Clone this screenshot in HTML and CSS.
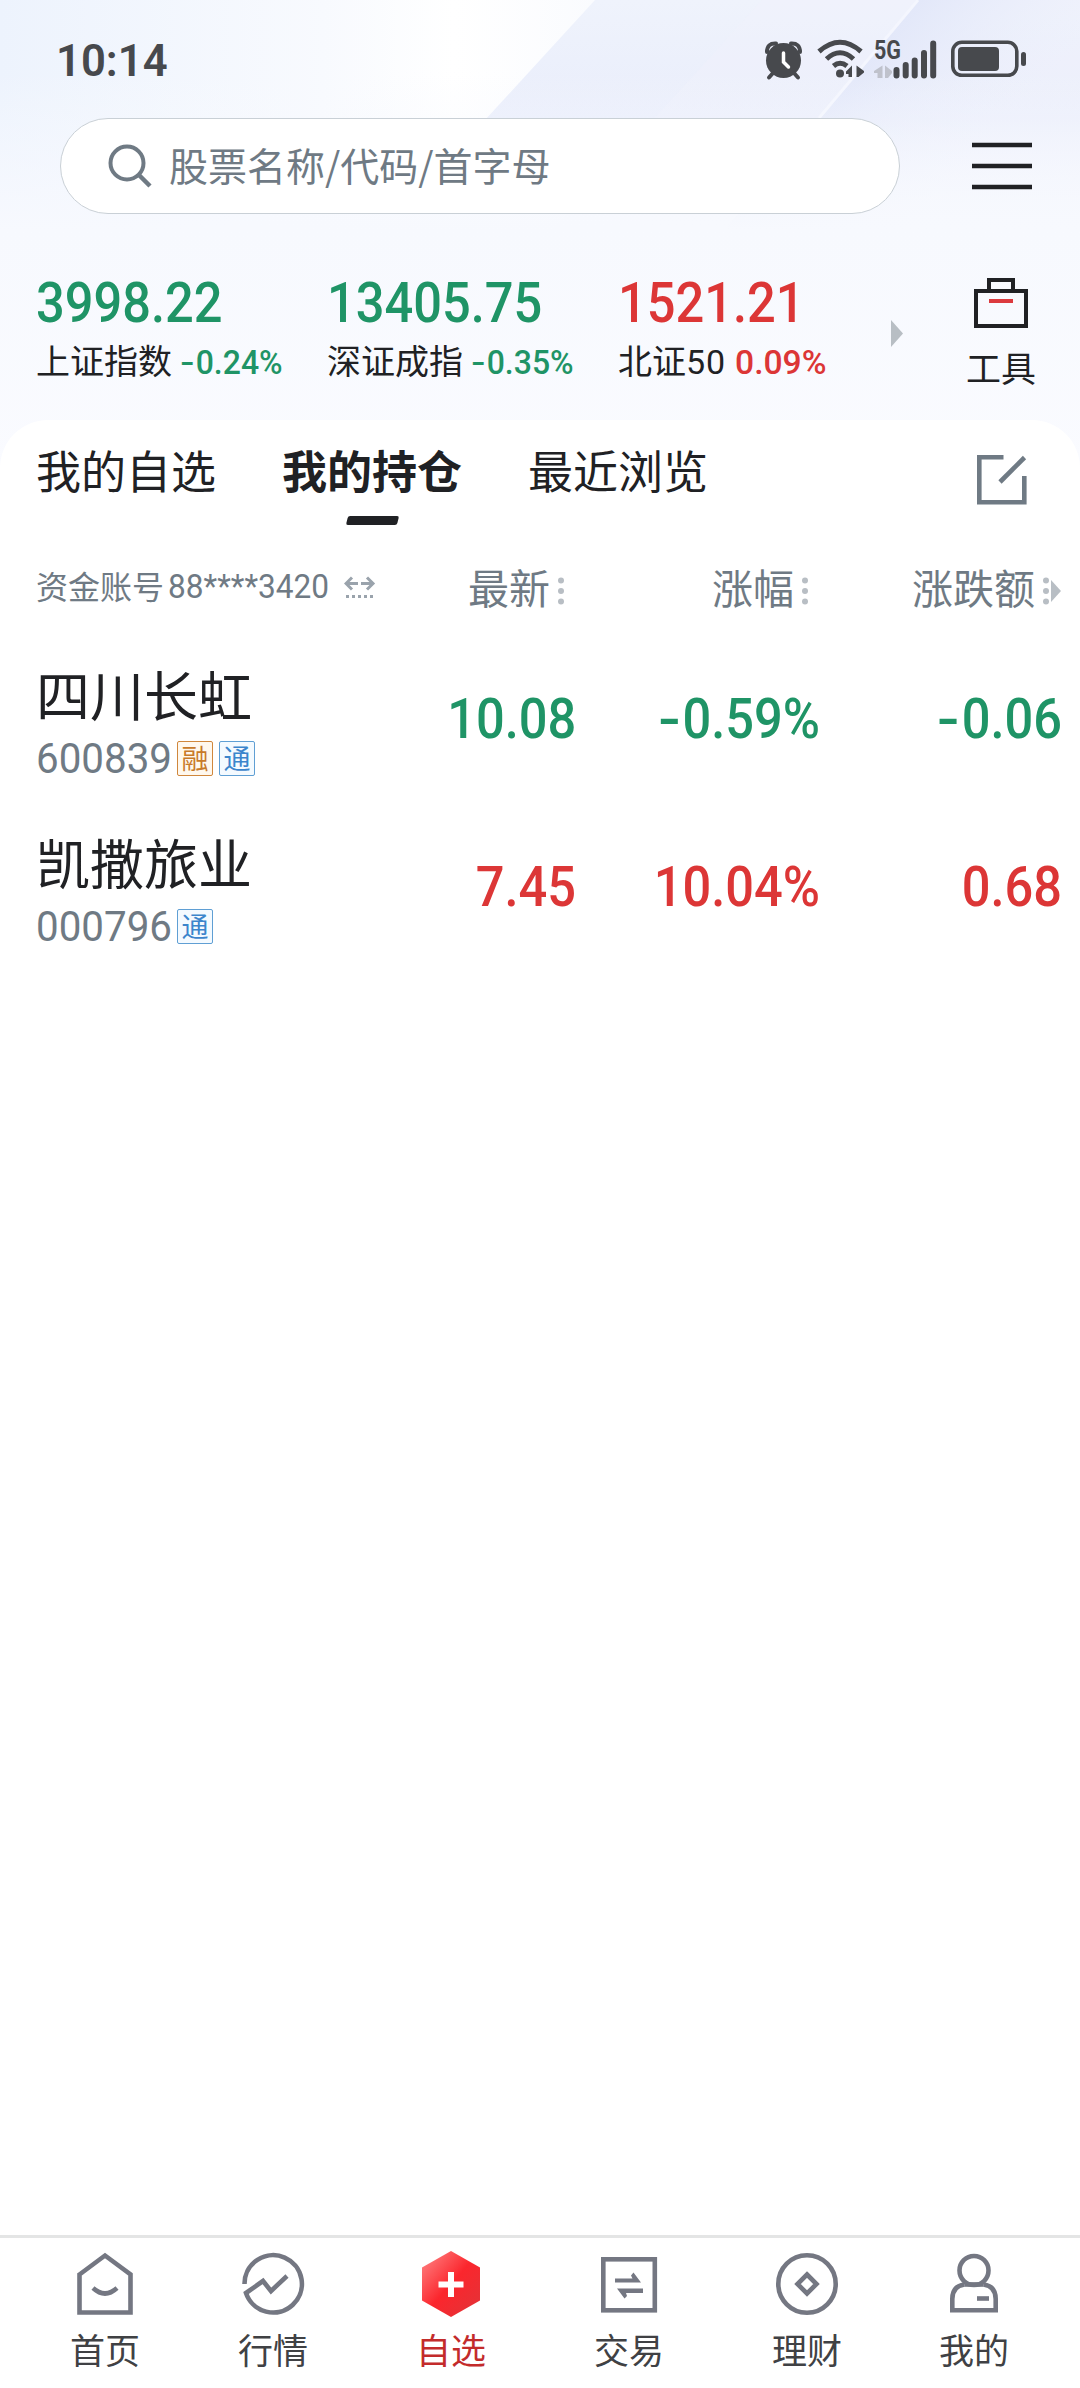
FILE: index.html
```html
<!DOCTYPE html>
<html lang="zh-CN">
	<head>
		<meta charset="utf-8" />
		<title>我的持仓</title>
		<link rel="stylesheet" href="styles.css">
	</head>
	<body>
		<div class="header">
			<svg class="header-bg" width="1080" height="480" viewBox="0 0 1080 480">
				<defs>
					<linearGradient id="base" x1="0" y1="0" x2="1" y2="0">
						<stop offset="0" stop-color="#edf3fd" />
						<stop offset="0.3" stop-color="#f8fafe" />
						<stop offset="0.42" stop-color="#ffffff" />
						<stop offset="0.6" stop-color="#f8fafe" />
						<stop offset="1" stop-color="#f4f7fe" />
					</linearGradient>
					<linearGradient id="band" gradientUnits="userSpaceOnUse" x1="0" y1="0" x2="0" y2="240">
						<stop offset="0" stop-color="#eff3fc" />
						<stop offset="0.5" stop-color="#e9edfb" />
						<stop offset="0.9" stop-color="#e9edfb" stop-opacity="0" />
					</linearGradient>
					<linearGradient id="band2" gradientUnits="userSpaceOnUse" x1="850" y1="20" x2="980" y2="150">
						<stop offset="0" stop-color="#dde3f8" />
						<stop offset="1" stop-color="#ebeffb" stop-opacity="0" />
					</linearGradient>
					<linearGradient id="fade" x1="0" y1="0" x2="0" y2="1">
						<stop offset="0.15" stop-color="#f8faff" stop-opacity="0" />
						<stop offset="0.48" stop-color="#f7f9fe" />
						<stop offset="1" stop-color="#fafbff" />
					</linearGradient>
				</defs>
				<rect width="1080" height="480" fill="url(#base)" />
				<path d="M595 0H1080V240H375Z" fill="url(#band)" />
				<path d="M762 0H1080V240H544Z" fill="#f1f3fd" opacity="0.3" />
				<path d="M918 0H1080V240H716Z" fill="url(#band2)" />
				<path d="M918 0L819 118" stroke="#f4f6fe" stroke-width="3" />
				<rect width="1080" height="480" fill="url(#fade)" />
			</svg>
			<div class="status">
				<span class="time">10:14</span>
				<svg width="264" height="54" viewBox="764 32 264 54" fill="#47494d">
					<!-- alarm -->
					<circle cx="783.5" cy="60.5" r="17.5" />
					<path d="M767 52Q767 43 776 43.500M800 52Q800 43 791 43.500M773 73L769 77.500M794 73L798 77.500" fill="none" stroke="#47494d" stroke-width="4" stroke-linecap="round" />
					<path d="M783.500 53V62L788.500 67" fill="none" stroke="#fff" stroke-width="3.500" stroke-linecap="round" />
					<!-- wifi -->
					<path d="M819 51.500Q840 33 861 51.500M826.500 59Q840 46.500 853.500 59M833.500 66Q840 60.500 847 66" fill="none" stroke="#47494d" stroke-width="5" />
					<circle cx="840" cy="73.500" r="4" />
					<path d="M852 65.500V77H848.500V74H846V71.500ZM856.500 65.500L864 71V72.500L858.500 77H856.500Z" />
					<!-- mobile signal -->
					<text class="net" x="874" y="59" textLength="27" lengthAdjust="spacingAndGlyphs">5G</text>
					<path d="M882.500 65.500V78H877.500V73H874V71ZM885 65.500L892 71V73L888 78H885Z" fill="#bfc2cc" />
					<path d="M896.500 70V75.500M905.700 65V75.500M914.700 60.500V75.500M924 53V75.500M933.200 43.500V75.500" stroke="#47494d" stroke-width="6" stroke-linecap="round" />
					<!-- battery -->
					<rect x="952.800" y="42.300" width="64" height="33" rx="9" fill="none" stroke="#47494d" stroke-width="3.600" />
					<rect x="958" y="47" width="41" height="24" rx="4" />
					<rect x="1021" y="52" width="5" height="14" rx="2.500" />
				</svg>
			</div>
			<div class="search-row">
				<div class="search">
					<svg width="46" height="46" viewBox="0 0 46 46" fill="none" stroke="#6f7a84" stroke-width="4">
						<circle cx="20" cy="20" r="16.500" />
						<path d="M31 31L43 43" stroke-width="4.500" />
					</svg>
					<span>股票名称/代码/首字母</span>
				</div>
				<svg width="60" height="48" viewBox="0 0 60 48" stroke="#202124" stroke-width="4.600">
					<path d="M0 3H60M0 24H60M0 45H60" />
				</svg>
			</div>
			<div class="indexes">
				<div class="index down">
					<div class="value">3998.22</div>
					<div class="label"><span>上证指数</span><b><u>-</u>0.24%</b></div>
				</div>
				<div class="index down">
					<div class="value">13405.75</div>
					<div class="label"><span>深证成指</span><b><u>-</u>0.35%</b></div>
				</div>
				<div class="index up">
					<div class="value">1521.21</div>
					<div class="label"><span>北证<i>50</i></span><b>0.09%</b></div>
				</div>
				<svg class="more" width="12" height="27" viewBox="0 0 12 27"><path d="M0 0L12 13.500L0 27Z" fill="#b8bec4" /></svg>
				<div class="tools">
					<svg width="54" height="50" viewBox="0 0 54 50" fill="none" stroke="#202124" stroke-width="4">
						<path d="M2 13H52V48H2ZM15 13V2H39V13" />
						<path d="M15 23H39" stroke="#dc3a3e" />
					</svg>
					<span>工具</span>
				</div>
			</div>
		</div>

		<div class="panel">
			<div class="tabs">
				<span>我的自选</span>
				<span class="active">我的持仓</span>
				<span>最近浏览</span>
				<svg class="edit" width="50" height="50" viewBox="0 0 50 50" fill="none" stroke="#6f7a84" stroke-width="4.600">
					<path d="M26.500 2.300H2.300V47.300H47.300V21" />
					<path d="M23 27L47.500 2.500" />
				</svg>
			</div>
			<div class="row head">
				<div class="account">
					<span>资金账号</span><i>88****3420</i>
					<svg width="32" height="24" viewBox="0 0 32 24" fill="none" stroke="#9aa3ac" stroke-width="3">
						<path d="M14 7.500H2.500M8 1.500L2 7.500L8 13.500M17 7.500H28.500M23 1.500L29 7.500L23 13.500" />
						<path d="M2 20.500H30" stroke-dasharray="3 3" />
					</svg>
				</div>
				<div class="col">最新<svg width="8" height="28" viewBox="0 0 8 28" fill="#b8bec4"><circle cx="4" cy="3.500" r="3" /><circle cx="4" cy="14" r="3" /><circle cx="4" cy="24.500" r="3" /></svg></div>
				<div class="col">涨幅<svg width="8" height="28" viewBox="0 0 8 28" fill="#b8bec4"><circle cx="4" cy="3.500" r="3" /><circle cx="4" cy="14" r="3" /><circle cx="4" cy="24.500" r="3" /></svg></div>
				<div class="col last">涨跌额<svg width="20" height="28" viewBox="0 0 20 28" fill="#b8bec4"><circle cx="4" cy="3.500" r="3" /><circle cx="4" cy="14" r="3" /><circle cx="4" cy="24.500" r="3" /><path d="M9 3L19 14L9 25Z" /></svg></div>
			</div>
			<div class="row stock down">
				<div>
					<div class="name">四川长虹</div>
					<div class="code"><span>600839</span><em class="rong">融</em><em>通</em></div>
				</div>
				<div class="num">10.08</div>
				<div class="num"><u>-</u>0.59%</div>
				<div class="num"><u>-</u>0.06</div>
			</div>
			<div class="row stock up">
				<div>
					<div class="name">凯撒旅业</div>
					<div class="code"><span>000796</span><em>通</em></div>
				</div>
				<div class="num">7.45</div>
				<div class="num">10.04%</div>
				<div class="num">0.68</div>
			</div>
		</div>

		<div class="nav">
			<div class="item">
				<svg width="68" height="68" viewBox="0 0 68 68">
					<path d="M8.500 24.500L34 5.500L59.500 24.500V62.500H8.500Z" />
					<path d="M22 38Q34 49 46 38" />
				</svg>
				<span>首页</span>
			</div>
			<div class="item">
				<svg width="68" height="68" viewBox="0 0 68 68">
					<path d="M5.500 34A28.700 28.700 0 1 1 7 43L24 31L32 41L48 26" />
				</svg>
				<span>行情</span>
			</div>
			<div class="item active">
				<svg width="68" height="68" viewBox="0 0 68 68">
					<defs>
						<linearGradient id="hex" x1="0" y1="0" x2="1" y2="1">
							<stop offset="0" stop-color="#ff8a8a" />
							<stop offset="0.5" stop-color="#fb262d" />
							<stop offset="1" stop-color="#e03438" />
						</linearGradient>
					</defs>
					<path d="M34 1L63 17.500V50.500L34 67L5 50.500V17.500Z" fill="url(#hex)" stroke="none" />
					<path d="M34 22V47M21.500 34.500H46.500" stroke="#fff" stroke-width="6" />
				</svg>
				<span>自选</span>
			</div>
			<div class="item">
				<svg width="68" height="68" viewBox="0 0 68 68">
					<rect x="8.300" y="9.300" width="51.500" height="51" />
					<path d="M20 28.500V32.500H46L38.500 22.500L36 25.500L37.500 28.500ZM48 43V38.500H22L29.500 48.500L32 46L31 43Z" fill="#747782" stroke="none" />
				</svg>
				<span>交易</span>
			</div>
			<div class="item">
				<svg width="68" height="68" viewBox="0 0 68 68">
					<circle cx="34" cy="34" r="28.700" />
					<path d="M34 24.500L43.500 34L34 43.500L24.500 34Z" />
				</svg>
				<span>理财</span>
			</div>
			<div class="item">
				<svg width="68" height="68" viewBox="0 0 68 68">
					<ellipse cx="34" cy="20.500" rx="14.500" ry="14.500" />
					<path d="M24.500 34.500Q12.300 36 12.300 49V60.300H55.700V49Q55.700 36 43.500 34.500" />
					<path d="M24.500 34.500H43.500" />
					<path d="M37 48.500H49" />
				</svg>
				<span>我的</span>
			</div>
		</div>
	</body>
</html>
```

FILE: styles.css
```css
* {
	box-sizing: border-box;
}

body {
	margin: 0;
	width: 1080px;
	height: 2388px;
	display: flex;
	flex-direction: column;
	overflow: hidden;
	background-color: #fff;
	color: #202124;
	font-family: "Noto Sans CJK SC", sans-serif;
}

svg {
	display: block;
	flex: none;
}

i,
em {
	font-style: normal;
}

/* minus sign, wider than the font's own */
u {
	display: inline-block;
	margin: 0 0.09em 0 0.03em;
	text-decoration: none;
	transform: scaleX(1.3);
}

.up {
	color: #dc3636;
}

.down {
	color: #1f9466;
}

/* header */

.header {
	position: relative;
	height: 420px;
}

.header-bg {
	position: absolute;
	top: 0;
	left: 0;
	z-index: -1;
}

.status {
	height: 118px;
	padding: 32px 52px 0 56px;
	display: flex;
	justify-content: space-between;
	align-items: flex-start;
}

.time {
	margin-top: 6px;
	font-family: Roboto, sans-serif;
	font-size: 45px;
	font-weight: 600;
	line-height: 46px;
	color: #47494d;
	transform: scaleX(0.97);
	transform-origin: left;
}

.net {
	font-family: Roboto, sans-serif;
	font-size: 25px;
	font-weight: 700;
}

.search-row {
	display: flex;
	justify-content: space-between;
	align-items: center;
	padding: 0 48px 0 60px;
}

.search {
	width: 840px;
	height: 96px;
	padding-left: 46px;
	display: flex;
	align-items: center;
	gap: 16px;
	border: 1px solid #c9d0d6;
	border-radius: 48px;
	background-color: #fff;
	color: #6f7a84;
	font-size: 39px;
	line-height: 48px;
}

.search span {
	margin-top: -4px;
}

.indexes {
	display: flex;
	padding: 58px 44px 0 36px;
}

.index {
	width: 291px;
	white-space: nowrap;
}

.value {
	font-family: Roboto, sans-serif;
	font-size: 55px;
	font-weight: 500;
	line-height: 62px;
	transform: scaleX(0.92);
	transform-origin: left;
}

.label {
	display: flex;
	gap: 9px;
	margin-top: 6px;
	color: #202124;
	font-size: 34px;
	line-height: 40px;
}

.label i,
.label b {
	font-family: Roboto, sans-serif;
	font-weight: 400;
}

.label i {
	letter-spacing: 1px;
}

.label b {
	margin-top: 2px;
	font-weight: 500;
	transform: scaleX(0.94);
	transform-origin: left;
}

.up b {
	color: #dc3636;
	transform: scaleX(0.99);
}

.down b {
	color: #1f9466;
}

.more {
	margin: 48px 0 0 -18px;
}

.tools {
	margin-left: auto;
	margin-top: 6px;
	display: flex;
	flex-direction: column;
	align-items: center;
	gap: 19px;
	font-size: 35px;
	line-height: 40px;
}

/* holdings */

.panel {
	flex: 1;
	background-color: #fff;
	border-radius: 48px 48px 0 0;
}

.tabs {
	height: 120px;
	padding: 20px 53px 0 36px;
	display: flex;
	align-items: flex-start;
	gap: 66px;
	font-size: 45px;
	line-height: 60px;
}

.tabs .active {
	font-weight: 700;
}

.tabs .active::after {
	content: "";
	display: block;
	width: 51px;
	height: 9px;
	margin: 16px auto 0;
	background-color: #202124;
	border-radius: 2px;
	transform: skewX(-14deg);
}

.edit {
	margin: 15px 0 0 auto;
}

.row {
	display: grid;
	grid-template-columns: 400px 140px 244px 242px;
	padding-left: 36px;
}

.head {
	height: 100px;
	align-items: center;
	color: #6f7a84;
}

.account {
	display: flex;
	align-items: center;
	margin-top: -8px;
	font-size: 32px;
	line-height: 40px;
	white-space: nowrap;
}

.account span {
	margin-top: -2px;
}

.account i {
	width: 172px;
	margin-left: 4px;
	font-family: Roboto, sans-serif;
	font-size: 34px;
	font-weight: 400;
	transform: scaleX(0.93);
	transform-origin: left;
}

.col {
	display: flex;
	align-items: center;
	justify-content: flex-end;
	gap: 7px;
	margin-top: -8px;
	padding-right: 11px;
	font-size: 41px;
	line-height: 48px;
}

.col svg {
	margin-top: 10px;
}

.col.last {
	padding-right: 0;
}

.account svg {
	margin-left: 4px;
	margin-top: 4px;
}

.stock {
	height: 168px;
	padding-top: 22px;
}

.name {
	color: #202124;
	font-size: 54px;
	line-height: 64px;
}

.code {
	display: flex;
	align-items: center;
	height: 50px;
	margin-top: 7px;
}

.code span {
	width: 141px;
	color: #6f7a84;
	font-family: Roboto, sans-serif;
	font-size: 42px;
	font-weight: 400;
	transform: scaleX(0.96);
	transform-origin: left;
}

.code em {
	width: 36px;
	height: 35px;
	margin-right: 6px;
	border: 1px solid #5f9fd4;
	border-radius: 2px;
	background-color: #f4faff;
	color: #3c85cc;
	font-size: 27px;
	line-height: 31px;
	text-align: center;
}

.code .rong {
	border-color: #d0873c;
	background-color: #fff8ee;
	color: #c87a2a;
}

.num {
	padding-top: 25px;
	text-align: right;
	font-family: Roboto, sans-serif;
	font-size: 55px;
	font-weight: 500;
	line-height: 64px;
	transform: scaleX(0.92);
	transform-origin: right;
}

/* bottom nav */

.nav {
	height: 153px;
	padding: 12px 27px 0 26px;
	display: grid;
	grid-template-columns: 158px repeat(4, 178px) 156px;
	border-top: 3px solid #e4e5e5;
	background-color: #fff;
}

.item {
	display: flex;
	flex-direction: column;
	align-items: center;
	gap: 11px;
	color: #404144;
	font-size: 35px;
	line-height: 40px;
}

.item svg {
	fill: none;
	stroke: #747782;
	stroke-width: 4.6;
}

.item.active {
	color: #c32b2b;
}
```
